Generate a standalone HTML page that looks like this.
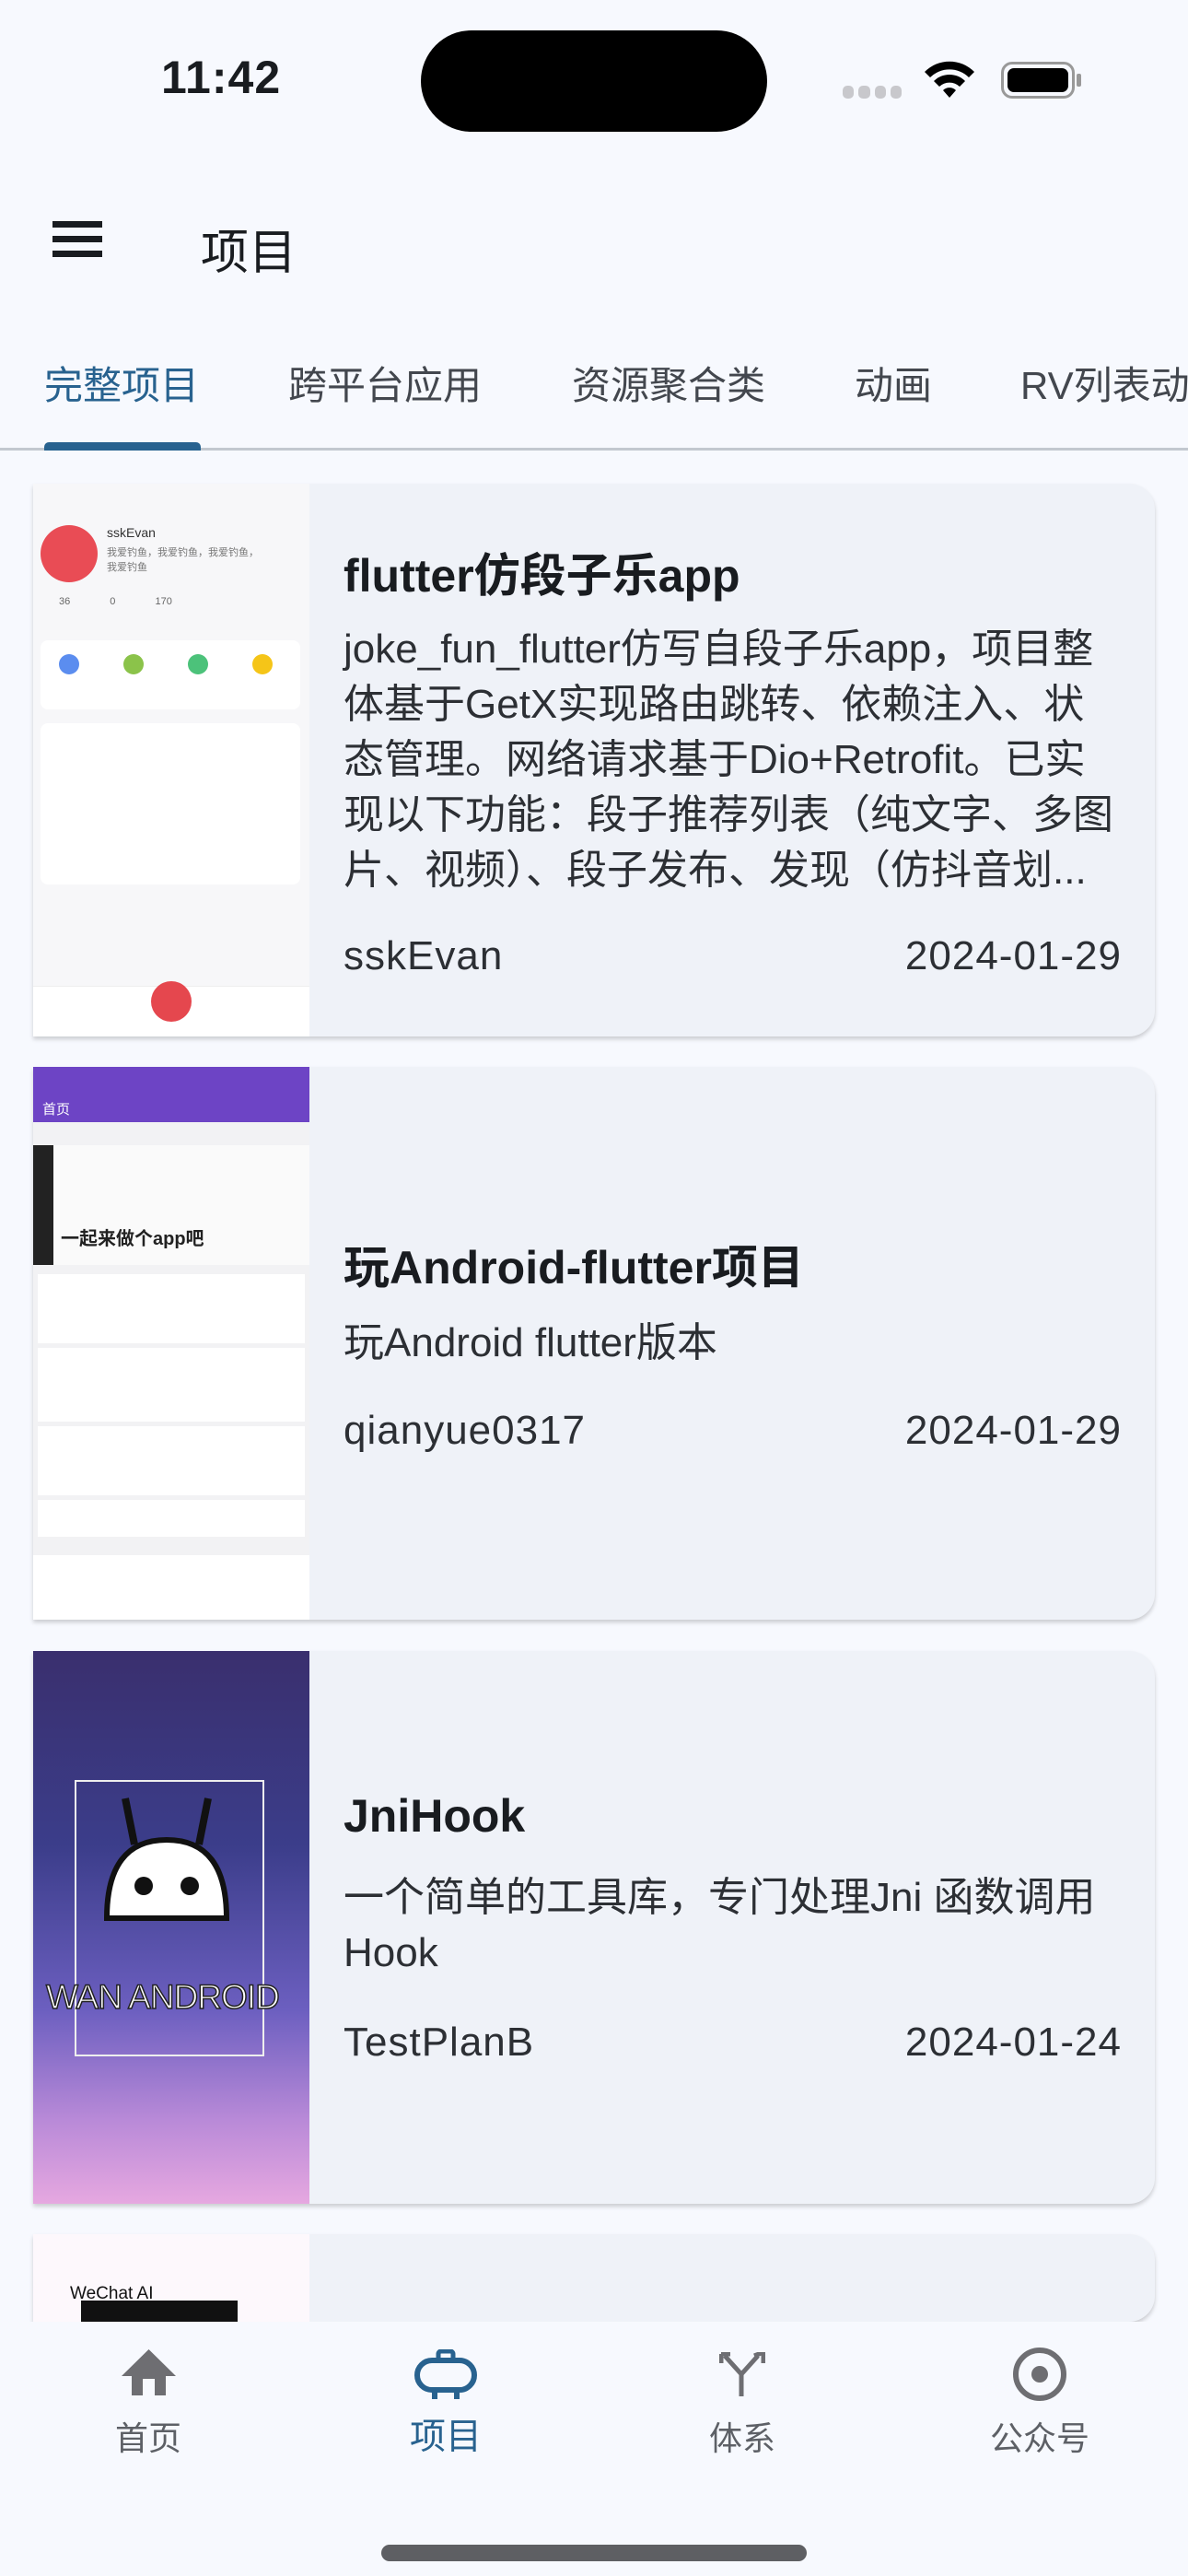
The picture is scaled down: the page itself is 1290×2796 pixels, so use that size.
<!DOCTYPE html>
<html><head><meta charset="utf-8"><style>
*{margin:0;padding:0;box-sizing:border-box}
html,body{width:1290px;height:2796px;overflow:hidden}
body{background:#f7f9fe;font-family:"Liberation Sans","Noto Sans CJK SC",sans-serif;color:#191c20}
#wrap{position:relative;width:1290px;height:2796px;overflow:hidden}
.abs{position:absolute}
.time{left:175px;top:55px;font-size:50px;font-weight:bold;letter-spacing:1px}
.island{left:457px;top:33px;width:376px;height:110px;background:#000;border-radius:55px}
.tab{position:absolute;top:385px;font-size:42px;color:#43474e;white-space:nowrap}
.card{position:absolute;left:36px;width:1218px;height:600px;background:#eff2f8;border-radius:0 28px 28px 0;box-shadow:0 3px 5px rgba(0,0,0,.18);overflow:hidden}
.img{position:absolute;left:0;top:0;width:300px;height:600px;overflow:hidden}
.ct{position:absolute;left:337px;right:36px}
.title{font-size:50px;font-weight:bold;color:#191c20;white-space:nowrap}
.desc{font-size:44px;line-height:60px;color:#2c2f34}
.meta{font-size:44px;color:#2c2f34;display:flex;justify-content:space-between;letter-spacing:1px}
.nav{position:absolute;left:0;top:2520px;width:1290px;height:276px;background:#f7f9fe}
.nl{position:absolute;top:98px;width:200px;text-align:center;font-size:36px;color:#5d6066}
</style></head><body><div id="wrap">
<div class="abs time">11:42</div>
<div class="abs island"></div>
<div class="abs" style="left:915px;top:93px;width:64px;height:14px;display:flex;gap:5px"><i style="flex:1;background:#c8c8cc;border-radius:5px"></i><i style="flex:1;background:#c8c8cc;border-radius:5px"></i><i style="flex:1;background:#c8c8cc;border-radius:5px"></i><i style="flex:1;background:#c8c8cc;border-radius:5px"></i></div>
<svg class="abs" style="left:1001px;top:62px" width="60" height="46" viewBox="0 0 60 46"><path d="M3 16 A38 38 0 0 1 57 16 L51 22 A30 30 0 0 0 9 22Z M13 26 A24 24 0 0 1 47 26 L41 32 A16 16 0 0 0 19 32Z M23 36 A10 10 0 0 1 37 36 L30 44Z" fill="#000"/></svg>
<div class="abs" style="left:1087px;top:67px;width:80px;height:40px;border:3px solid #999;border-radius:12px;padding:4px"><div style="width:100%;height:100%;background:#000;border-radius:7px"></div></div>
<div class="abs" style="left:1169px;top:80px;width:5px;height:14px;background:#999;border-radius:2px"></div>

<div class="abs" style="left:57px;top:240px;width:54px;height:7px;background:#191c20"></div>
<div class="abs" style="left:57px;top:256px;width:54px;height:7px;background:#191c20"></div>
<div class="abs" style="left:57px;top:272px;width:54px;height:7px;background:#191c20"></div>
<div class="abs" style="left:218px;top:232px;font-size:52px">项目</div>

<div class="tab" style="left:48px;color:#28628f">完整项目</div>
<div class="tab" style="left:313px">跨平台应用</div>
<div class="tab" style="left:621px">资源聚合类</div>
<div class="tab" style="left:928px">动画</div>
<div class="tab" style="left:1108px">RV列表动画</div>
<div class="abs" style="left:0;top:486px;width:1290px;height:3px;background:#c2c8cf"></div>
<div class="abs" style="left:48px;top:480px;width:170px;height:9px;background:#28628f;border-radius:5px 5px 0 0"></div>

<div class="card" style="top:525px">
 <div class="img" style="background:#f7f7f9">
  <div class="abs" style="left:8px;top:45px;width:62px;height:62px;border-radius:50%;background:#e94c55"></div>
  <div class="abs" style="left:80px;top:45px;font-size:14px;color:#333">sskEvan</div>
  <div class="abs" style="left:80px;top:66px;font-size:11px;color:#777">我爱钓鱼，我爱钓鱼，我爱钓鱼，<br>我爱钓鱼</div>
  <div class="abs" style="left:28px;top:122px;font-size:11px;color:#666;word-spacing:40px">36 0 170</div>
  <div class="abs" style="left:8px;top:170px;width:282px;height:75px;background:#fff;border-radius:8px"></div>
  <div class="abs" style="left:8px;top:260px;width:282px;height:175px;background:#fff;border-radius:8px"></div>
  <div class="abs" style="left:28px;top:185px;width:22px;height:22px;border-radius:50%;background:#5b8def"></div>
  <div class="abs" style="left:98px;top:185px;width:22px;height:22px;border-radius:50%;background:#8bc34a"></div>
  <div class="abs" style="left:168px;top:185px;width:22px;height:22px;border-radius:50%;background:#4cc27a"></div>
  <div class="abs" style="left:238px;top:185px;width:22px;height:22px;border-radius:50%;background:#f5c518"></div>
  <div class="abs" style="left:0;top:545px;width:300px;height:55px;background:#fff;border-top:1px solid #eee"></div>
  <div class="abs" style="left:128px;top:540px;width:44px;height:44px;border-radius:50%;background:#e5474e"></div>
 </div>
 <div class="ct" style="top:60px"><div class="title">flutter仿段子乐app</div></div>
 <div class="ct desc" style="top:150px">joke_fun_flutter仿写自段子乐app，项目整体基于GetX实现路由跳转、依赖注入、状态管理。网络请求基于Dio+Retrofit。已实现以下功能：段子推荐列表（纯文字、多图片、视频）、段子发布、发现（仿抖音划...</div>
 <div class="ct meta" style="top:488px"><span>sskEvan</span><span>2024-01-29</span></div>
</div>

<div class="card" style="top:1158px">
 <div class="img" style="background:#f2f2f4">
  <div class="abs" style="left:0;top:0;width:300px;height:60px;background:#6d44c5"></div>
  <div class="abs" style="left:10px;top:35px;font-size:15px;color:#fff">首页</div>
  <div class="abs" style="left:0;top:85px;width:300px;height:130px;background:#fafafa"></div>
  <div class="abs" style="left:0;top:85px;width:22px;height:130px;background:#222"></div>
  <div class="abs" style="left:30px;top:170px;font-size:20px;font-weight:bold;color:#222">一起来做个app吧</div>
  <div class="abs" style="left:5px;top:225px;width:290px;height:75px;background:#fff"></div>
  <div class="abs" style="left:5px;top:305px;width:290px;height:80px;background:#fff"></div>
  <div class="abs" style="left:5px;top:390px;width:290px;height:75px;background:#fff"></div>
  <div class="abs" style="left:5px;top:470px;width:290px;height:40px;background:#fff"></div>
  <div class="abs" style="left:0;top:530px;width:300px;height:70px;background:#fff"></div>
 </div>
 <div class="ct" style="top:178px"><div class="title">玩Android-flutter项目</div></div>
 <div class="ct desc" style="top:270px">玩Android flutter版本</div>
 <div class="ct meta" style="top:370px"><span>qianyue0317</span><span>2024-01-29</span></div>
</div>

<div class="card" style="top:1792px">
 <div class="img" style="background:linear-gradient(180deg,#3a2f6e 0%,#3b3d8a 35%,#6c5fc0 65%,#b98ad8 85%,#e6a8e0 100%)">
  <div class="abs" style="left:45px;top:140px;width:206px;height:300px;border:2px solid #eee"></div>
  <div class="abs" style="left:70px;top:150px;width:150px;height:200px;">
   <svg width="150" height="200" viewBox="0 0 150 200"><path d="M30 10 L40 60 M120 10 L110 60" stroke="#111" stroke-width="8" fill="none"/><path d="M10 140 Q10 55 75 55 Q140 55 140 140 Z" fill="#fff" stroke="#111" stroke-width="6"/><circle cx="50" cy="105" r="10" fill="#111"/><circle cx="100" cy="105" r="10" fill="#111"/></svg>
  </div>
  <div class="abs" style="left:14px;top:355px;font-size:37px;color:#fff;-webkit-text-stroke:1.5px #222;letter-spacing:-1px">WAN ANDROID</div>
 </div>
 <div class="ct" style="top:150px"><div class="title">JniHook</div></div>
 <div class="ct desc" style="top:238px">一个简单的工具库，专门处理Jni 函数调用Hook</div>
 <div class="ct meta" style="top:400px"><span>TestPlanB</span><span>2024-01-24</span></div>
</div>

<div class="card" style="top:2425px;height:95px">
 <div class="img" style="background:#fdf8fc">
  <div class="abs" style="left:40px;top:54px;font-size:19px;color:#111">WeChat AI</div>
  <div class="abs" style="left:52px;top:72px;width:170px;height:23px;background:#111"></div>
 </div>
</div>

<div class="nav">
 <svg class="abs" style="left:132px;top:30px" width="59" height="50" viewBox="0 0 59 50"><path d="M29.5 0 L59 29 L48 29 L48 50 L36 50 L36 32 L23 32 L23 50 L11 50 L11 29 L0 29 Z" fill="#6e6e72"/></svg>
 <div class="nl" style="left:61px">首页</div>
 <svg class="abs" style="left:450px;top:30px" width="68" height="54" viewBox="0 0 68 54"><rect x="26" y="2" width="16" height="10" rx="3" fill="none" stroke="#28628f" stroke-width="5"/><rect x="3" y="12" width="62" height="32" rx="16" fill="none" stroke="#28628f" stroke-width="6"/><path d="M22 44 V54 M46 44 V54" stroke="#28628f" stroke-width="6"/></svg>
 <div class="nl" style="left:384px;top:94px;color:#28628f;font-size:39px">项目</div>
 <svg class="abs" style="left:781px;top:33px" width="50" height="48" viewBox="0 0 50 48"><path d="M24 48 V24 L6 4 M2 2 H12 M2 2 V12 M24 24 L42 4 M48 0 V12 M48 0 L38 4" stroke="#6e6e72" stroke-width="5" fill="none"/></svg>
 <div class="nl" style="left:706px">体系</div>
 <svg class="abs" style="left:1099px;top:27px" width="60" height="60" viewBox="0 0 60 60"><circle cx="30" cy="30" r="26" fill="none" stroke="#6e6e72" stroke-width="6"/><circle cx="30" cy="30" r="9" fill="#6e6e72"/></svg>
 <div class="nl" style="left:1029px">公众号</div>
</div>
<div class="abs" style="left:414px;top:2762px;width:462px;height:18px;background:#5e5f63;border-radius:9px"></div>
</div></body></html>
